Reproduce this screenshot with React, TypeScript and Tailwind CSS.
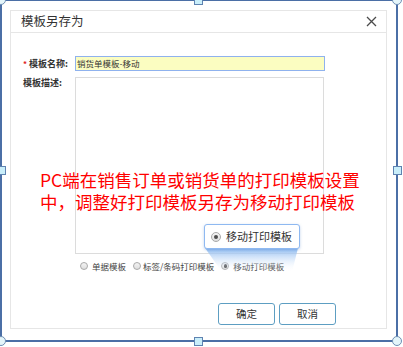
import React from 'react';

const CJK = '"Noto Sans CJK SC", "Liberation Sans", sans-serif';

function Radio({ checked = false, size = 8 }: { checked?: boolean; size?: number }) {
  return (
    <span
      className="flex items-center justify-center rounded-full border border-[#a9a9a9] bg-gradient-to-b from-[#f4f4f4] to-[#dedede] shrink-0"
      style={{ width: size, height: size }}
    >
      {checked && <span className="block rounded-full bg-[#4d4d4d]" style={{ width: size * 0.4, height: size * 0.4 }} />}
    </span>
  );
}

function Handle({ kind, x, y }: { kind: 'circle' | 'square'; x: number; y: number }) {
  return kind === 'circle' ? (
    <span
      className="absolute w-[10px] h-[10px] rounded-full border border-[#6f8fb4] bg-[#e4f5fa]"
      style={{ left: x - 5, top: y - 5 }}
    />
  ) : (
    <span
      className="absolute w-[9px] h-[9px] border border-[#5f83b1] bg-[#c9eefa]"
      style={{ left: x - 4.5, top: y - 4.5 }}
    />
  );
}

export default function App() {
  return (
    <div className="relative w-[403px] h-[347px] bg-white overflow-hidden" style={{ fontFamily: CJK }}>
      {/* Dialog */}
      <div className="ml-[10px] mt-[10px] w-[377px] h-[319px] border border-[#e6e6e6] flex flex-col">
        <div className="h-[22px] border-b border-[#e6e6e6] flex items-center justify-between pl-[10px] pr-[9px]">
          <span className="text-[12.5px] text-[#333] leading-none">模板另存为</span>
          <svg width="11" height="11" viewBox="0 0 11 11">
            <path d="M1 1 L10 10 M10 1 L1 10" stroke="#4a4a4a" strokeWidth="1.3" />
          </svg>
        </div>

        <div className="flex-1 pl-[12px] pt-[23px]">
          <div className="flex items-center h-[15px]">
            <div className="w-[52px] flex items-center text-[9px] font-bold text-[#333]">
              <span className="text-[#e02020] w-[6px] text-[8px]">*</span>
              <span>模板名称:</span>
            </div>
            <div className="w-[250px] h-[15px] bg-[#fbfdc1] border border-[#8fb2ee] flex items-center pl-[1px] text-[8.5px] text-[#333] leading-none">
              销货单模板-移动
            </div>
          </div>

          <div className="flex items-start mt-[6px]">
            <div className="w-[52px] text-[9px] font-bold text-[#333] leading-none pt-[1px]">模板描述:</div>
            <div className="w-[249px] h-[177px] border border-[#dcdcdc] bg-white" />
          </div>

          <div className="flex items-center h-[10px] mt-[7px] pl-[57px] text-[8.5px] text-[#444] leading-none">
            <Radio />
            <span className="ml-[4px]">单据模板</span>
            <span className="ml-[7px]"><Radio /></span>
            <span className="ml-[2px]">标签/条码打印模板</span>
            <span className="ml-[7px]"><Radio checked /></span>
            <span className="ml-[4px]">移动打印模板</span>
          </div>

          <div className="flex gap-[4px] ml-[195px] mt-[32px]">
            <button className="w-[57px] h-[22px] rounded-[3px] border border-[#5d9ec2] bg-white text-[10.5px] text-[#333]">
              确定
            </button>
            <button className="w-[57px] h-[22px] rounded-[3px] border border-[#5d9ec2] bg-white text-[10.5px] text-[#333]">
              取消
            </button>
          </div>
        </div>
      </div>

      {/* Annotation text */}
      <div className="absolute left-[40px] top-[169px] text-[17.5px] leading-[22px] text-[#ff0000] whitespace-nowrap">
        PC端在销售订单或销货单的打印模板设置
        <br />
        中，调整好打印模板另存为移动打印模板
      </div>

      {/* Magnifier callout */}
      <svg className="absolute left-[200px] top-[246px]" width="105" height="26" viewBox="0 0 105 26">
        <defs>
          <linearGradient id="cg" x1="0" y1="0" x2="0" y2="1">
            <stop offset="0" stopColor="#86b6f0" stopOpacity="0.95" />
            <stop offset="1" stopColor="#ffffff" stopOpacity="0" />
          </linearGradient>
        </defs>
        <polygon points="5,2 98,2 92,26 22,26" fill="url(#cg)" />
      </svg>
      <div className="absolute left-[204px] top-[224px] w-[96px] h-[25px] rounded-[3px] border-[1.5px] border-[#8fb9f1] bg-white shadow-[0_1px_3px_rgba(80,130,200,0.35)] flex items-center pl-[6px] gap-[5px]">
        <Radio checked size={10} />
        <span className="text-[11px] text-[#333] leading-none">移动打印模板</span>
      </div>

      {/* Selection frame */}
      <div className="absolute left-0 top-[-1px] w-[398px] h-[343px] border-2 border-[#4b6fa6]" />
      <Handle kind="circle" x={1} y={0} />
      <Handle kind="square" x={198} y={0} />
      <Handle kind="circle" x={397} y={0} />
      <Handle kind="square" x={1} y={170} />
      <Handle kind="square" x={397} y={170} />
      <Handle kind="circle" x={1} y={341} />
      <Handle kind="square" x={198} y={341} />
      <Handle kind="circle" x={397} y={341} />
    </div>
  );
}
